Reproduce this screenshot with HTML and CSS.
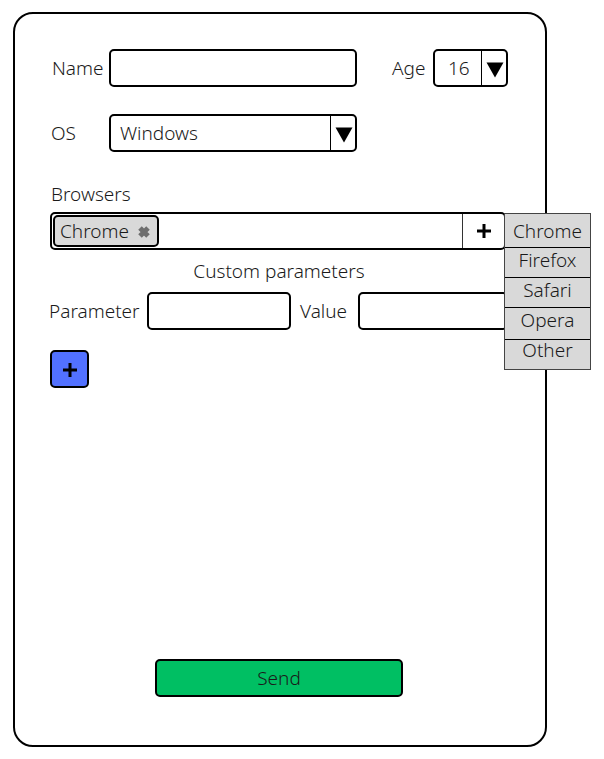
FILE: index.html
```
<!DOCTYPE html>
<html lang="en">
<head>
<meta charset="utf-8">
<meta name="viewport" content="width=device-width, initial-scale=1">
<title>Form</title>
<link rel="stylesheet" href="styles.css">
</head>
<body>
<form class="card">
  <div class="grid">
    <label class="inset" for="name">Name</label>
    <input class="box" id="name" type="text">
    <label class="age-label" for="age">Age</label>
    <div class="picker picker-age">
      <select class="box" id="age"><option>16</option></select>
      <span class="arrow"><svg viewBox="0 0 18 16" width="18" height="16"><path d="M0.5 0.5H17.5L9 15.5Z"/></svg></span>
    </div>
    <label class="os-label" for="os">OS</label>
    <div class="picker">
      <select class="box" id="os"><option>Windows</option></select>
      <span class="arrow"><svg viewBox="0 0 18 16" width="18" height="16"><path d="M0.5 0.5H17.5L9 15.5Z"/></svg></span>
    </div>
  </div>

  <div class="browsers-label" id="browsers-label">Browsers</div>
  <div class="box tags" role="group" aria-labelledby="browsers-label">
    <span class="chip">Chrome
      <button class="remove" type="button" aria-label="Remove Chrome"><svg viewBox="0 0 14 14" width="14" height="14"><path d="M3 3L11 11M11 3L3 11"/></svg></button>
    </span>
    <button class="add" type="button" aria-label="Add browser"><svg class="plus" viewBox="0 0 14 14" width="14" height="14"><path d="M7 0V14M0 7H14"/></svg></button>
    <ul class="menu">
      <li><button type="button">Chrome</button></li>
      <li><button type="button">Firefox</button></li>
      <li><button type="button">Safari</button></li>
      <li><button type="button">Opera</button></li>
      <li><button type="button">Other</button></li>
    </ul>
  </div>

  <h2>Custom parameters</h2>
  <div class="params">
    <label for="parameter">Parameter</label>
    <input class="box" id="parameter" type="text">
    <label class="value-label" for="value">Value</label>
    <input class="box" id="value" type="text">
  </div>
  <button class="box add-param" type="button" aria-label="Add parameter"><svg class="plus" viewBox="0 0 14 14" width="14" height="14"><path d="M7 0V14M0 7H14"/></svg></button>

  <button class="box send" type="submit">Send</button>
</form>
</body>
</html>
```
FILE: styles.css
```
* {
  box-sizing: border-box;
}

body {
  margin: 0;
  background: #fff;
  color: #1a1a1a;
  font: 300 19px/26px "Noto Sans", "Open Sans", sans-serif;
}

button,
input,
select {
  margin: 0;
  padding: 0;
  color: inherit;
  font: inherit;
}

button {
  border: 0;
  background: none;
}

svg {
  display: block;
}

.card {
  display: flex;
  flex-direction: column;
  min-height: calc(100vh - 24px);
  margin: 12px 57px 12px 13px;
  padding: 35px 37px 48px 35px;
  border: 2px solid #000;
  border-radius: 20px;
}

.box {
  height: 38px;
  min-width: 0;
  border: 2px solid #000;
  border-radius: 5px;
  background: #fff;
}

input.box {
  width: 100%;
  padding: 0 9px;
}

.grid {
  display: grid;
  grid-template-columns: 59px minmax(0, 1fr) 76px 75px;
  row-gap: 27px;
  align-items: center;
}

.inset {
  padding-left: 2px;
}

.os-label {
  padding-left: 1px;
}

.age-label {
  padding-left: 35px;
}

.picker {
  display: grid;
  grid-template-columns: 1fr 27px;
}

.picker select {
  grid-area: 1 / 1 / 2 / 3;
  appearance: none;
  padding: 0 36px 0 9px;
}

.picker-age select {
  padding: 0 28px 0 13px;
}

.arrow {
  grid-area: 1 / 2;
  display: grid;
  place-items: center;
  padding: 4px 1px 0 0;
  border-left: 1px solid #000;
  pointer-events: none;
}

.browsers-label {
  margin: 29px 0 5px;
  padding-left: 1px;
}

.tags {
  position: relative;
  display: flex;
  justify-content: space-between;
  margin-right: 2px;
}

.chip {
  display: flex;
  align-items: center;
  gap: 8px;
  margin: 1px;
  padding: 0 6px 0 5px;
  border: 2px solid #000;
  border-radius: 5px;
  background: #d9d9d9;
}

.remove {
  padding-top: 2px;
}

.remove path {
  stroke: #6e6e6e;
  stroke-width: 5;
}

.add {
  display: grid;
  place-items: center;
  width: 42px;
  border-left: 1px solid #333;
}

.plus path {
  stroke: #000;
  stroke-width: 3;
}

.menu {
  position: absolute;
  top: -1px;
  left: 100%;
  width: 87px;
  margin: 0;
  padding: 0;
  border: 1px solid #444;
  background: #d9d9d9;
  list-style: none;
}

.menu li {
  padding-bottom: 5px;
  border-bottom: 1px solid #000;
  line-height: 24px;
}

.menu li:first-child {
  padding: 5px 0 4px;
}

.menu li:nth-child(4) {
  padding-bottom: 7px;
}

.menu li:last-child {
  padding-bottom: 9px;
  border: 0;
  line-height: 20px;
}

.menu button {
  display: block;
  width: 100%;
}

h2 {
  margin: 8px 0;
  font: inherit;
  text-align: center;
}

.params {
  display: grid;
  grid-template-columns: 98px minmax(0, 144fr) 67px minmax(0, 150fr);
  align-items: center;
  margin-left: -1px;
}

.value-label {
  padding-left: 9px;
}

.add-param {
  display: grid;
  place-items: center;
  width: 39px;
  margin-top: 20px;
  padding-top: 2px;
  background: #5271ff;
}

.send {
  align-self: center;
  width: 54%;
  margin-top: auto;
  background: #00bf63;
}
```
